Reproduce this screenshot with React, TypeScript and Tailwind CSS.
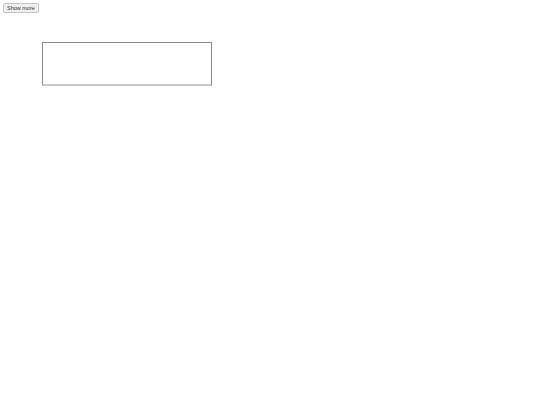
export default function App() {
  return (
    <div className="min-h-[405px] w-[540px] bg-white font-['Liberation_Sans',Arial,sans-serif]">
      <div className="p-[3px]">
        <button className="flex h-[10px] items-center rounded-[2px] border border-[#c4c4c4] bg-[#efefef] px-[3px] pt-[1px] text-[5.5px] leading-none text-[#333]">
          Show more
        </button>
      </div>
      <div className="ml-[42px] mt-[26px] h-[44px] w-[170px] border border-[#8a8a8a] border-b-[#c8c8c8] border-b-2" />
    </div>
  );
}
